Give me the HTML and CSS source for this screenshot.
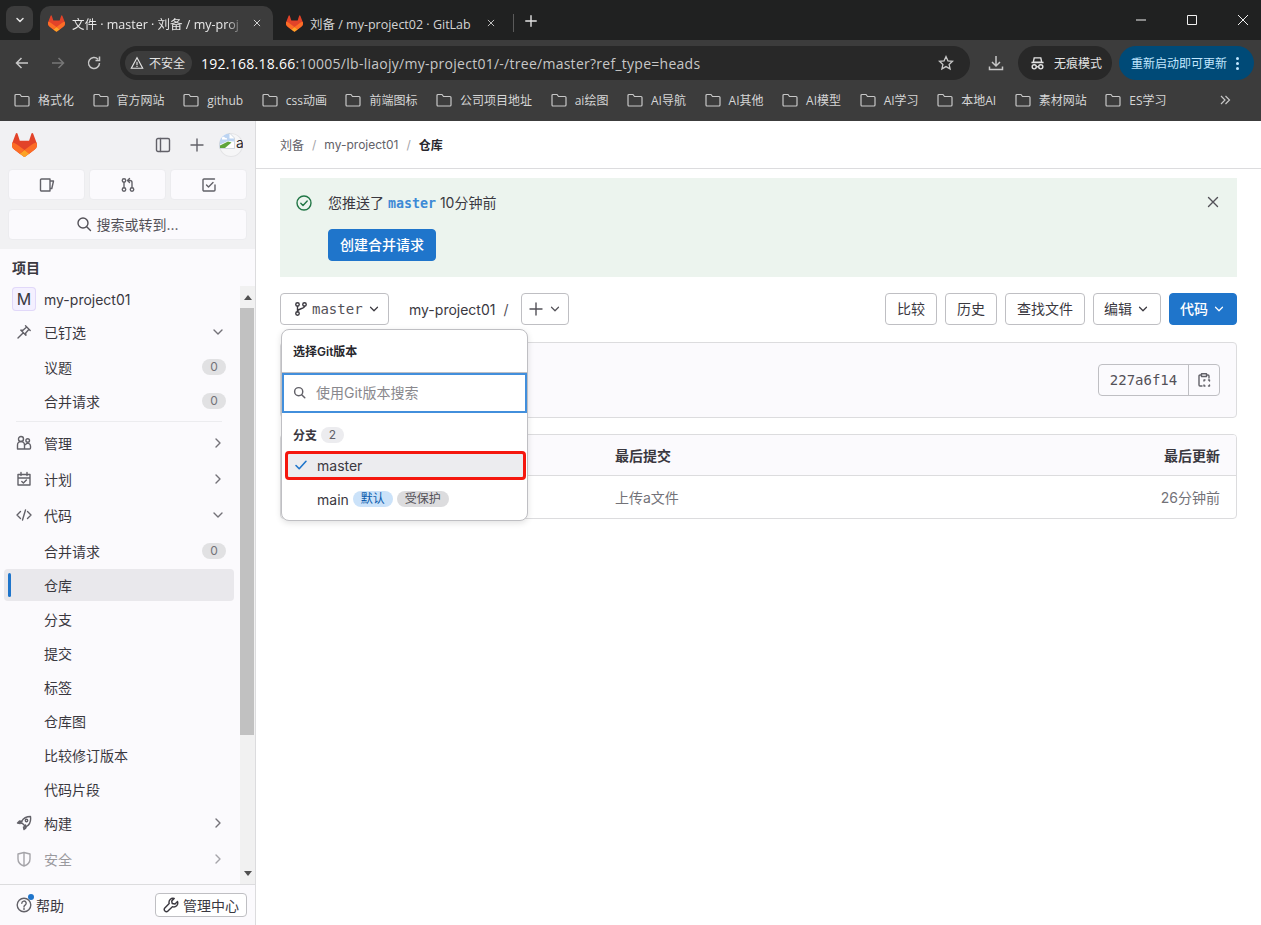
FILE: index.html
```html
<!DOCTYPE html>
<html lang="zh-CN">
<head>
<meta charset="utf-8">
<title>文件 · master · 刘备 / my-project01</title>
<link rel="stylesheet" href="styles.css">
</head>
<body>
<svg class="defs" width="0" height="0" aria-hidden="true">
  <symbol id="tanuki" viewBox="0 0 25 24">
    <path fill="#E24329" d="m24.507 9.5-.034-.09L21.082.562a.896.896 0 0 0-1.694.091l-2.29 7.01H7.825L5.535.653a.898.898 0 0 0-1.694-.09L.451 9.411.416 9.5a6.297 6.297 0 0 0 2.09 7.278l.012.01.03.022 5.16 3.867 2.56 1.935 1.554 1.176a1.051 1.051 0 0 0 1.268 0l1.555-1.176 2.56-1.935 5.197-3.89.014-.01A6.297 6.297 0 0 0 24.507 9.5Z"/>
    <path fill="#FC6D26" d="m24.507 9.5-.034-.09a11.44 11.44 0 0 0-4.56 2.051l-7.447 5.632 4.742 3.584 5.197-3.89.014-.01A6.297 6.297 0 0 0 24.507 9.5Z"/>
    <path fill="#FCA326" d="m7.707 20.677 2.56 1.935 1.555 1.176a1.051 1.051 0 0 0 1.268 0l1.555-1.176 2.56-1.935-4.743-3.584-4.755 3.584Z"/>
    <path fill="#FC6D26" d="M5.01 11.461a11.43 11.43 0 0 0-4.56-2.05L.416 9.5a6.297 6.297 0 0 0 2.09 7.278l.012.01.03.022 5.16 3.867 4.745-3.584-7.444-5.632Z"/>
  </symbol>
  <symbol id="folder" viewBox="0 0 16 16"><path d="M1 3.5a1 1 0 0 1 1-1h4l1.5 2H14a1 1 0 0 1 1 1v7.5a1 1 0 0 1-1 1H2a1 1 0 0 1-1-1Z"/></symbol>
  <symbol id="down" viewBox="0 0 16 16"><path d="m4 6 4 4 4-4"/></symbol>
  <symbol id="right" viewBox="0 0 16 16"><path d="m6 4 4 4-4 4"/></symbol>
  <symbol id="close" viewBox="0 0 16 16"><path d="m3.5 3.5 9 9m0-9-9 9"/></symbol>
  <symbol id="plus" viewBox="0 0 16 16"><path d="M8 2v12M2 8h12"/></symbol>
  <symbol id="branch" viewBox="0 0 16 16"><circle cx="4.5" cy="3.5" r="1.75"/><circle cx="4.5" cy="12.5" r="1.75"/><circle cx="11.5" cy="3.5" r="1.75"/><path d="M4.5 5.25v5.5M11.5 5.25c0 3-7 2-7 5"/></symbol>
  <symbol id="search" viewBox="0 0 16 16"><circle cx="7" cy="7" r="5"/><path d="m10.7 10.7 3.8 3.8"/></symbol>
</svg>

<header class="browser">
  <div class="tabstrip">
    <button class="tab-list"><svg class="ic ic-bold"><use href="#down"/></svg></button>
    <div class="tab tab-active">
      <svg class="favicon"><use href="#tanuki"/></svg>
      <span class="tab-title tab-fade">文件 · master · 刘备 / my-proj</span>
      <svg class="ic tab-x"><use href="#close"/></svg>
    </div>
    <div class="tab tab-second">
      <svg class="favicon"><use href="#tanuki"/></svg>
      <span class="tab-title">刘备 / my-project02 · GitLab</span>
      <svg class="ic tab-x"><use href="#close"/></svg>
    </div>
    <span class="tab-sep"></span>
    <svg class="ic new-tab"><use href="#plus"/></svg>
    <div class="win-controls">
      <svg class="win-ic" viewBox="0 0 12 12"><path d="M1 6h10"/></svg>
      <svg class="win-ic" viewBox="0 0 12 12"><path d="M1.5 1.5h9v9h-9z"/></svg>
      <svg class="win-ic" viewBox="0 0 12 12"><path d="m1 1 10 10M11 1 1 11"/></svg>
    </div>
  </div>
  <div class="toolbar">
    <svg class="nav-btn" viewBox="0 0 16 16"><path d="M14 8H2.5M7.5 3 2.5 8l5 5"/></svg>
    <svg class="nav-btn nav-off" viewBox="0 0 16 16"><path d="M2 8h11.5M8.5 3l5 5-5 5"/></svg>
    <svg class="nav-btn" viewBox="0 0 16 16"><path d="M13.5 8A5.5 5.5 0 1 1 12 4.2M13.5 1.5v4h-4"/></svg>
    <div class="omnibox">
      <span class="chip">
        <svg class="chip-ic" viewBox="0 0 16 16"><path d="M8 2 1.5 14h13ZM8 6.5v4M8 11.5v1.2"/></svg>
        不安全
      </span>
      <span class="url"><b>192.168.18.66</b>:10005/lb-liaojy/my-project01/-/tree/master?ref_type=heads</span>
      <svg class="star" viewBox="0 0 16 16"><path d="m8 1.6 1.9 4.2 4.6.5-3.4 3.1 1 4.5L8 11.6l-4.1 2.3 1-4.5-3.4-3.1 4.6-.5Z"/></svg>
    </div>
    <svg class="download" viewBox="0 0 18 18"><path d="M9 2v9.5M5 8l4 4 4-4M2.500 12.500v3h13v-3"/></svg>
    <div class="incognito">
      <svg class="inc-ic" viewBox="0 0 16 16"><path d="M4.5 2h7l1 4.5h-9ZM1.5 7h13"/><circle cx="4.5" cy="11.5" r="2.2"/><circle cx="11.5" cy="11.5" r="2.2"/><path d="M6.7 11.5h2.6"/></svg>
      无痕模式
    </div>
    <div class="update">重新启动即可更新<span class="dots"><i></i><i></i><i></i></span></div>
  </div>
  <div class="bookmarks">
    <a class="bm"><svg class="bm-ic"><use href="#folder"/></svg>格式化</a>
    <a class="bm"><svg class="bm-ic"><use href="#folder"/></svg>官方网站</a>
    <a class="bm"><svg class="bm-ic"><use href="#folder"/></svg>github</a>
    <a class="bm"><svg class="bm-ic"><use href="#folder"/></svg>css动画</a>
    <a class="bm"><svg class="bm-ic"><use href="#folder"/></svg>前端图标</a>
    <a class="bm"><svg class="bm-ic"><use href="#folder"/></svg>公司项目地址</a>
    <a class="bm"><svg class="bm-ic"><use href="#folder"/></svg>ai绘图</a>
    <a class="bm"><svg class="bm-ic"><use href="#folder"/></svg>AI导航</a>
    <a class="bm"><svg class="bm-ic"><use href="#folder"/></svg>AI其他</a>
    <a class="bm"><svg class="bm-ic"><use href="#folder"/></svg>AI模型</a>
    <a class="bm"><svg class="bm-ic"><use href="#folder"/></svg>AI学习</a>
    <a class="bm"><svg class="bm-ic"><use href="#folder"/></svg>本地AI</a>
    <a class="bm"><svg class="bm-ic"><use href="#folder"/></svg>素材网站</a>
    <a class="bm"><svg class="bm-ic"><use href="#folder"/></svg>ES学习</a>
    <svg class="bm-more" viewBox="0 0 12 12"><path d="m2 2 4 4-4 4M6.5 2l4 4-4 4"/></svg>
  </div>
</header>

<div class="app">
  <aside class="sidebar">
    <div class="side-top">
      <div class="side-head">
        <svg class="logo"><use href="#tanuki"/></svg>
        <svg class="ic head-panel" viewBox="0 0 16 16"><rect x="1.5" y="1.5" width="13" height="13" rx="1.5"/><path d="M5.500 1.500v13"/></svg>
        <svg class="ic head-plus"><use href="#plus"/></svg>
        <span class="avatar">
          <svg class="broken" viewBox="0 0 16 16"><path fill="#fff" stroke="#b5c2d2" stroke-width=".6" d="M.5.5h10.500l4.500 4.500v10.500H.5Z"/><path fill="#bcd4f2" d="M1 1h9.500v4.500H15v3L9 8 1 11.500Z"/><path fill="#fff" d="M3 5.500a1.500 1.500 0 0 1 3-.500 1.300 1.300 0 0 1 2 1.500H3Z"/><path fill="#5fa53c" d="M1 15v-2.500L9 8.500l3.500 1L6 15Z"/></svg>a
        </span>
      </div>
      <div class="side-actions">
        <button class="side-btn"><svg class="ic" viewBox="0 0 16 16"><path d="M1.500 3a1 1 0 0 1 1-1h8.500v12H2.500a1 1 0 0 1-1-1ZM11 4h3.500l-1.700 7.500H11"/></svg></button>
        <button class="side-btn"><svg class="ic" viewBox="0 0 16 16"><circle cx="4" cy="3.500" r="1.750"/><circle cx="4" cy="12.500" r="1.750"/><circle cx="12" cy="12.500" r="1.750"/><path d="M4 5.250v5.500M12 10.750V5.500a2 2 0 0 0-2-2H8M9.500 1.500l-2 2 2 2"/></svg></button>
        <button class="side-btn"><svg class="ic" viewBox="0 0 16 16"><path d="M14 8v5a1 1 0 0 1-1 1H3a1 1 0 0 1-1-1V3a1 1 0 0 1 1-1h10.500M5.500 8l2 2 4.500-4.500"/></svg></button>
      </div>
      <button class="side-search"><svg class="ic"><use href="#search"/></svg>搜索或转到...</button>
    </div>
    <div class="side-title">项目</div>
    <div class="side-scroll">
      <nav class="side-nav">
        <div class="project"><span class="project-icon">M</span>my-project01</div>
        <div class="nav-item nav-major">
          <svg class="ic nav-ic" viewBox="0 0 16 16"><path d="m9.500 1.800 4.700 4.700M10.700 3 7 6.300l-2.300-.200 5.200 5.200-.200-2.300L13 5.300M7.300 8.700 2 14"/></svg>
          <span class="grow">已钉选</span><svg class="ic chev"><use href="#down"/></svg>
        </div>
        <div class="nav-item"><span class="grow">议题</span><span class="count">0</span></div>
        <div class="nav-item"><span class="grow">合并请求</span><span class="count">0</span></div>
        <hr class="nav-rule">
        <div class="nav-item nav-major">
          <svg class="ic nav-ic" viewBox="0 0 16 16"><circle cx="5" cy="4" r="2.500"/><path d="M1.500 14V10a3.500 3.500 0 0 1 7 0v4ZM8.500 14h5a1 1 0 0 0 1-1v-2a2.700 2.700 0 0 0-5-1.400"/><circle cx="11.700" cy="5.500" r="1.800"/></svg>
          <span class="grow">管理</span><svg class="ic chev"><use href="#right"/></svg>
        </div>
        <div class="nav-item nav-major">
          <svg class="ic nav-ic" viewBox="0 0 16 16"><path d="M2 3.500h12V14H2ZM2 7h12M5 1.500v3M11 1.500v3M5.800 10.500l1.600 1.500 3-3"/></svg>
          <span class="grow">计划</span><svg class="ic chev"><use href="#right"/></svg>
        </div>
        <div class="nav-item nav-major">
          <svg class="ic nav-ic" viewBox="0 0 16 16"><path d="M4.500 4.500 1 8l3.500 3.500M11.500 4.500 15 8l-3.500 3.500M9.500 3l-3 10"/></svg>
          <span class="grow">代码</span><svg class="ic chev"><use href="#down"/></svg>
        </div>
        <div class="nav-item nav-sub-first"><span class="grow">合并请求</span><span class="count">0</span></div>
        <div class="nav-item nav-current"><span class="grow">仓库</span></div>
        <div class="nav-item"><span class="grow">分支</span></div>
        <div class="nav-item"><span class="grow">提交</span></div>
        <div class="nav-item"><span class="grow">标签</span></div>
        <div class="nav-item"><span class="grow">仓库图</span></div>
        <div class="nav-item"><span class="grow">比较修订版本</span></div>
        <div class="nav-item"><span class="grow">代码片段</span></div>
        <div class="nav-item nav-major nav-after-sub">
          <svg class="ic nav-ic" viewBox="0 0 16 16"><path d="M14.500 1.500c-4 0-7 1.500-9 5l-2 1 3 1 2 2 1 3 1-2c3.500-2 4.500-6 4-10ZM6 6.500 3.500 6 1.500 8l2.500.500M9.500 10l.500 2.500-2 2-.500-2.500"/><circle cx="10.500" cy="5.500" r="1.200"/></svg>
          <span class="grow">构建</span><svg class="ic chev"><use href="#right"/></svg>
        </div>
        <div class="nav-item nav-major nav-fade">
          <svg class="ic nav-ic" viewBox="0 0 16 16"><path d="M8 1.500 14 3v5c0 3.500-3 6-6 7-3-1-6-3.500-6-7V3ZM8 1.500V15"/></svg>
          <span class="grow">安全</span><svg class="ic chev"><use href="#right"/></svg>
        </div>
      </nav>
      <div class="scrollbar">
        <span class="sb-arrow"><i class="tri-up"></i></span>
        <span class="sb-thumb"></span>
        <span class="sb-fill"></span>
        <span class="sb-arrow"><i class="tri-down"></i></span>
      </div>
    </div>
    <div class="side-foot">
      <span class="help">
        <span class="help-icon">
          <svg class="ic" viewBox="0 0 16 16"><circle cx="8" cy="8" r="6.800"/><path d="M5.800 6.300a2.200 2.200 0 1 1 3.300 1.900c-.7.400-1.100.8-1.100 1.600M8 11.300v1.200"/></svg>
          <i class="help-dot"></i>
        </span>
        帮助
      </span>
      <button class="admin-btn"><svg class="ic" viewBox="0 0 16 16"><path d="M14.500 4.500 12 7l-2.800-.500L8.700 4l2.500-2.500a4 4 0 0 0-5 5L1.800 11a2.200 2.200 0 0 0 3.100 3.100l4.500-4.400a4 4 0 0 0 5.100-5.200Z"/></svg>管理中心</button>
    </div>
  </aside>

  <main class="main">
    <div class="crumbs">
      <span>刘备</span><i class="crumb-sep">/</i><span>my-project01</span><i class="crumb-sep">/</i><strong>仓库</strong>
    </div>
    <section class="alert">
      <svg class="alert-ic" viewBox="0 0 16 16"><circle cx="8" cy="8" r="7"/><path d="m4.800 8.200 2.200 2.200 4.200-4.400"/></svg>
      <div class="alert-body">
        <p class="alert-text">您推送了 <code class="alert-ref">master</code> 10分钟前</p>
        <button class="btn btn-blue alert-btn">创建合并请求</button>
      </div>
      <svg class="ic alert-x"><use href="#close"/></svg>
    </section>

    <div class="repo">
      <div class="repo-bar">
        <button class="btn ref-btn"><svg class="ic"><use href="#branch"/></svg><span class="mono">master</span><svg class="ic small"><use href="#down"/></svg></button>
        <span class="repo-path">my-project01</span><span class="repo-slash">/</span>
        <button class="btn add-btn"><svg class="ic"><use href="#plus"/></svg><svg class="ic small"><use href="#down"/></svg></button>
        <span class="grow"></span>
        <button class="btn w52">比较</button>
        <button class="btn w52">历史</button>
        <button class="btn w80">查找文件</button>
        <button class="btn w68">编辑<svg class="ic small"><use href="#down"/></svg></button>
        <button class="btn btn-blue w68 code-btn">代码<svg class="ic small"><use href="#down"/></svg></button>
      </div>

      <div class="commit">
        <div class="sha-group">
          <span class="sha mono">227a6f14</span>
          <span class="sha-copy"><svg class="ic" viewBox="0 0 16 16"><path d="M10.500 3H12a1 1 0 0 1 1 1v2M5.500 3H4a1 1 0 0 0-1 1v9a1 1 0 0 0 1 1h2M5.500 1.800h5v2.700h-5ZM9 8H8v1M12.500 8h1v1M9 14H8v-1M12.500 14h1v-1"/></svg></span>
        </div>
      </div>

      <div class="files">
        <div class="files-head">
          <span class="col-commit">最后提交</span><span class="col-time">最后更新</span>
        </div>
        <div class="files-row">
          <span class="col-commit">上传a文件</span><span class="col-time">26分钟前</span>
        </div>
      </div>

      <div class="menu">
        <div class="menu-title">选择Git版本</div>
        <div class="menu-search"><svg class="ic"><use href="#search"/></svg><span>使用Git版本搜索</span></div>
        <div class="menu-group"><b>分支</b><span class="menu-count">2</span></div>
        <div class="menu-item menu-selected"><svg class="ic check" viewBox="0 0 16 16"><path d="m3 8.500 3.200 3.200 6.800-7.400"/></svg>master</div>
        <div class="menu-item">main<span class="tag tag-blue">默认</span><span class="tag tag-gray">受保护</span></div>
      </div>
    </div>
  </main>
</div>
</body>
</html>
```
FILE: styles.css
```css
* { box-sizing: border-box; }
html, body { margin: 0; height: 100%; }
body {
  width: 1261px; height: 925px; overflow: hidden;
  display: flex; flex-direction: column;
  font-family: Inter, "Noto Sans CJK SC", sans-serif;
  font-size: 14px; color: #3a383f; background: #fff;
}
.defs { position: absolute; }
button { font: inherit; color: inherit; margin: 0; cursor: pointer; }
.ic { width: 16px; height: 16px; flex: none; fill: none; stroke: currentColor; stroke-width: 1.4; stroke-linecap: round; stroke-linejoin: round; }
.ic.small { width: 14px; height: 14px; }
.ic-bold { stroke-width: 2; }
.mono { font-family: "DejaVu Sans Mono", "Liberation Mono", monospace; color: #535158; }
.grow { flex: 1; }

/* browser chrome */
.browser { flex: none; height: 121px; background: #3c3c3c; color: #e3e3e3; font-family: "Open Sans", "Noto Sans CJK SC", sans-serif; }
.tabstrip { height: 40px; background: #202121; display: flex; align-items: flex-start; padding: 6px 0 0 6px; }
.tab-list { width: 27px; height: 27px; padding: 0; border: 0; border-radius: 8px; background: #3c3c3c; color: #e3e3e3; display: flex; align-items: center; justify-content: center; margin-right: 7px; }
.tab-list .ic { width: 12px; height: 12px; }
.tab { width: 233px; height: 34px; display: flex; align-items: center; padding: 0 8px; font-size: 12px; color: #d4d4d4; border-radius: 10px 10px 0 0; }
.tab-active { background: #3c3c3c; color: #e8e8e8; }
.tab-second { padding-left: 13px; width: 240px; padding-right: 14px; }
.favicon { width: 17px; height: 17px; flex: none; margin-right: 7px; }
.tab-title { flex: 1; white-space: nowrap; overflow: hidden; font-size: 12.500px; }
.tab-fade { -webkit-mask-image: linear-gradient(to right, #000 90%, transparent 100%); mask-image: linear-gradient(to right, #000 90%, transparent 100%); }
.tab-x { width: 10px; height: 10px; margin: 0 3px 0 8px; }
.tab-sep { width: 1px; height: 18px; background: #5a5a5a; margin: 8px 0 0 0; }
.new-tab { margin: 8px 0 0 10px; width: 14px; height: 14px; stroke-width: 1.6; color: #e3e3e3; }
.win-controls { margin-left: auto; display: flex; gap: 39px; padding: 8px 12px 0 0; }
.win-ic { width: 12px; height: 12px; fill: none; stroke: #f0f0f0; stroke-width: 1; }

.toolbar { height: 46px; padding: 6px 7px 0 14px; display: flex; align-items: flex-start; }
.nav-btn { width: 16px; height: 16px; margin: 9px 20px 0 0; fill: none; stroke: #c7c7c7; stroke-width: 1.5; flex: none; }
.nav-off { stroke: #777; }
.nav-btn:nth-child(3) { margin-right: 18px; }
.omnibox { width: 850px; height: 34px; border-radius: 17px; background: #282828; display: flex; align-items: center; padding: 0 16px 0 5px; }
.chip { height: 24px; width: 67px; border-radius: 12px; background: #3c3c3c; display: flex; align-items: center; gap: 5px; padding-left: 5px; font-size: 12px; color: #e3e3e3; white-space: nowrap; }
.chip-ic { width: 14px; height: 14px; fill: none; stroke: #e3e3e3; stroke-width: 1.3; flex: none; }
.url { flex: 1; margin-left: 9px; font-size: 14px; color: #c7c7c7; white-space: nowrap; letter-spacing: .019em; }
.url b { font-weight: 400; color: #ffffff; }
.star { width: 16px; height: 16px; fill: none; stroke: #c7c7c7; stroke-width: 1.3; }
.download { width: 18px; height: 18px; margin: 8px 0 0 17px; fill: none; stroke: #c7c7c7; stroke-width: 1.5; flex: none; }
.incognito { width: 94px; height: 34px; margin-left: 13px; border-radius: 17px; background: #282828; display: flex; align-items: center; gap: 9px; padding-left: 12px; font-size: 12px; color: #e3e3e3; white-space: nowrap; flex: none; }
.inc-ic { width: 15px; height: 15px; fill: none; stroke: #e3e3e3; stroke-width: 1.5; }
.update { width: 135px; height: 34px; margin-left: 7px; border-radius: 17px; background: #004a77; color: #c2e7ff; display: flex; align-items: center; padding-left: 12px; font-size: 12px; white-space: nowrap; flex: none; }
.dots { display: flex; flex-direction: column; gap: 2px; margin-left: 9px; }
.dots i { width: 3px; height: 3px; border-radius: 50%; background: #c2e7ff; }

.bookmarks { height: 35px; padding: 0 0 7px 14px; display: flex; align-items: center; gap: 18.600px; font-size: 12px; color: #d6d6d6; }
.bm { display: flex; align-items: center; gap: 8px; white-space: nowrap; }
.bm-ic { width: 16px; height: 16px; fill: none; stroke: #c7c7c7; stroke-width: 1.2; flex: none; }
.bm-more { width: 12px; height: 12px; margin-left: auto; margin-right: 30px; fill: none; stroke: #c7c7c7; stroke-width: 1.2; }

/* app layout */
.app { flex: 1; min-height: 0; display: flex; }
.sidebar { width: 256px; flex: none; display: flex; flex-direction: column; background: #fbfafd; border-right: 1px solid #dcdcde; }
.side-top { flex: none; height: 128px; padding: 12px 8px 0; background: #f1f1f3; }
.side-head { height: 24px; display: flex; align-items: center; color: #626168; margin-bottom: 12px; padding-left: 4px; }
.logo { width: 25px; height: 24px; }
.head-panel { margin-left: 118px; }
.head-plus { margin-left: 18px; }
.avatar { width: 24px; height: 24px; margin-left: 14px; border-radius: 50%; background: #f6f6f7; box-shadow: inset 0 0 0 1px #e3e3e5; display: flex; align-items: flex-start; overflow: hidden; font-size: 14px; line-height: 20px; color: #28272d; white-space: nowrap; }
.broken { width: 16px; height: 16px; flex: none; margin-right: 1px; }
.side-actions { display: flex; gap: 4px; margin-bottom: 9px; }
.side-btn { flex: 1; height: 31px; padding: 0; border: 1px solid #ececef; border-radius: 4px; background: #fbfafd; display: flex; align-items: center; justify-content: center; color: #626168; }
.side-search { width: 239px; height: 31px; padding: 0 0 2px; border: 1px solid #ececef; border-radius: 4px; background: #fbfafd; display: flex; align-items: center; justify-content: center; gap: 4px; color: #535158; font-size: 14px; }
.side-title { flex: none; height: 37px; padding: 0 0 2px 12px; display: flex; align-items: center; font-weight: 600; color: #3a383f; }
.side-scroll { flex: 1; min-height: 0; display: flex; }
.side-nav { width: 240px; flex: none; overflow: hidden; display: flex; flex-direction: column; }
.project { flex: none; height: 26px; padding-left: 12px; margin-bottom: 2px; display: flex; align-items: center; gap: 8px; }
.project-icon { width: 24px; height: 24px; border-radius: 4px; background: #f4f0ff; box-shadow: inset 0 0 0 1px #e1d8f9; display: flex; align-items: center; justify-content: center; font-size: 16px; }
.nav-item { flex: none; height: 32px; margin: 1px 6px 1px 4px; padding: 0 8px 0 40px; border-radius: 4px; display: flex; align-items: center; position: relative; }
.nav-major { height: 34px; }
.nav-sub-first { margin-top: 2px; }
.nav-after-sub { margin-top: 0; }
.nav-ic { position: absolute; left: 12px; top: 9px; color: #626168; }
.chev { color: #737278; }
.count { min-width: 24px; height: 16px; border-radius: 8px; background: #e1e1e3; color: #737278; font-size: 12px; line-height: 16px; text-align: center; }
.nav-rule { flex: none; width: 206px; border: 0; border-top: 1px solid #ececef; margin: 3px 0 3px 16px; }
.nav-current { background: #e9e8ec; }
.nav-current::before { content: ""; position: absolute; left: 4px; top: 4px; width: 3px; height: 24px; border-radius: 2px; background: #1f75cb; }
.nav-fade { color: #9a999e; }
.nav-fade .nav-ic, .nav-fade .chev { color: #a5a4a9; }
.scrollbar { width: 15px; flex: none; background: #f1f1f1; display: flex; flex-direction: column; }
.sb-arrow { flex: none; height: 22px; display: flex; align-items: center; justify-content: center; }
.tri-up { border: 4px solid transparent; border-top: 0; border-bottom: 5px solid #505050; }
.tri-down { border: 4px solid transparent; border-bottom: 0; border-top: 5px solid #505050; }
.sb-thumb { flex: none; height: 427px; width: 14px; background: #c1c1c1; }
.sb-fill { flex: 1; }
.side-foot { flex: none; height: 41px; border-top: 1px solid #dcdcde; display: flex; align-items: center; justify-content: space-between; padding: 0 8px 0 16px; }
.help { display: flex; align-items: center; gap: 4px; color: #3a383f; }
.help-icon { position: relative; display: flex; color: #626168; }
.help-dot { position: absolute; right: -2px; top: -3px; width: 6px; height: 6px; border-radius: 50%; background: #1f75cb; }
.admin-btn { width: 92px; height: 24px; padding: 0; border: 1px solid #bfbfc3; border-radius: 4px; background: #fff; display: flex; align-items: center; justify-content: center; gap: 4px; }

/* main */
.main { flex: 1; min-width: 0; padding: 0 24px; background: #fff; }
.crumbs { height: 48px; margin: 0 -24px; padding-left: 24px; border-bottom: 1px solid #dcdcde; display: flex; align-items: center; font-size: 12px; color: #626168; }
.crumbs strong { font-weight: 600; color: #28272d; }
.crumb-sep { font-style: normal; color: #a4a3a8; margin: 0 8px; }
.alert { height: 99px; margin-top: 9px; background: #ecf4ee; padding: 16px 16px 0 16px; display: flex; color: #3a383f; }
.alert-ic { width: 16px; height: 16px; margin: 1px 16px 0 0; fill: none; stroke: #217645; stroke-width: 1.4; flex: none; stroke-linecap: round; stroke-linejoin: round; }
.alert-body { flex: 1; }
.alert-text { margin: 0 0 16px; height: 19px; line-height: 17px; }
.alert-ref { font-family: "DejaVu Sans Mono", monospace; font-size: 13.300px; font-weight: 600; color: #3d8ad6; }
.alert-x { margin: 0; color: #535158; }
.btn { height: 32px; padding: 0 12px 2px; border: 1px solid #bfbfc3; border-radius: 4px; background: #fff; display: inline-flex; align-items: center; justify-content: center; gap: 6px; flex: none; color: #3a383f; }
.btn .ic { margin-bottom: -2px; }
.btn-blue { background: #1f75cb; border-color: #1f75cb; color: #fff; font-weight: 500; }
.alert-btn { width: 108px; padding: 0 0 2px; }
.repo { position: relative; margin-top: 16px; }
.repo-bar { height: 32px; display: flex; align-items: center; gap: 8px; }
.ref-btn { width: 109px; padding: 0 0 0 12px; gap: 3px; justify-content: flex-start; }
.ref-btn .ic { margin-bottom: 0; }
.ref-btn .small { margin-left: 1px; }
.repo-path { margin-left: 12px; }
.repo-slash { margin-right: 4px; color: #535158; }
.add-btn { width: 48px; padding: 0; gap: 4px; }
.add-btn .ic { margin-bottom: 0; color: #535158; }
.w52 { width: 52px; padding: 0 0 2px; }
.w80 { width: 80px; padding: 0 0 2px; }
.w68 { width: 68px; padding: 0 0 2px; gap: 4px; }
.commit { height: 76px; margin-top: 17px; background: #fbfafd; border: 1px solid #dcdcde; border-radius: 4px; display: flex; align-items: center; justify-content: flex-end; padding-right: 16px; }
.sha-group { display: flex; height: 32px; border: 1px solid #bfbfc3; border-radius: 4px; }
.sha { width: 90px; display: flex; align-items: center; justify-content: center; font-size: 14px; border-right: 1px solid #bfbfc3; }
.sha-copy { width: 30px; display: flex; align-items: center; justify-content: center; color: #626168; }
.files { margin-top: 16px; border: 1px solid #dcdcde; border-radius: 4px; height: 85px; overflow: hidden; }
.files-head { height: 41px; background: #fbfafd; border-bottom: 1px solid #dcdcde; display: flex; align-items: center; font-weight: 600; padding: 0 16px 0 334px; }
.files-row { height: 42px; display: flex; align-items: center; padding: 0 16px 0 334px; color: #737278; }
.col-commit { flex: 1; }
.col-time { text-align: right; }

/* ref dropdown */
.menu { position: absolute; left: 1px; top: 36px; width: 247px; height: 192px; background: #fff; border: 1px solid #bfbfc3; border-radius: 8px; box-shadow: 0 2px 6px rgba(0,0,0,.12); }
.menu-title { height: 43px; padding: 0 0 2px 11px; display: flex; align-items: center; font-size: 12px; font-weight: 600; color: #28272d; border-bottom: 1px solid #bfbfc3; }
.menu-search { height: 40px; border: 2px solid #428fdc; display: flex; align-items: center; gap: 10px; padding: 0 0 2px 9px; color: #626168; }
.menu-search .ic { width: 13px; height: 13px; stroke-width: 1.8; }
.menu-search span { color: #89888d; font-size: 14px; }
.menu-group { height: 38px; padding: 5px 0 0 11px; display: flex; align-items: center; gap: 4px; font-size: 12px; color: #3a383f; }
.menu-group b { font-weight: 600; }
.menu-count { width: 23px; height: 16px; border-radius: 8px; background: #ececef; color: #626168; line-height: 16px; text-align: center; }
.menu-item { height: 28px; margin: 0 1px 0 3px; padding-left: 32px; display: flex; align-items: center; position: relative; border-radius: 4px; color: #3a383f; }
.menu-selected { height: 29px; margin-bottom: 5px; background: #ececef; border: 3px solid #f5170e; padding: 0 0 1px 29px; }
.check { position: absolute; left: 5px; top: 3px; color: #1f75cb; stroke-width: 1.600; }
.tag { height: 16px; border-radius: 8px; margin-left: 4px; padding: 0 8px; font-size: 12px; line-height: 16px; }
.tag-blue { background: #cbe2f9; color: #0b5cad; }
.tag-gray { background: #dcdcde; color: #535158; }
```
